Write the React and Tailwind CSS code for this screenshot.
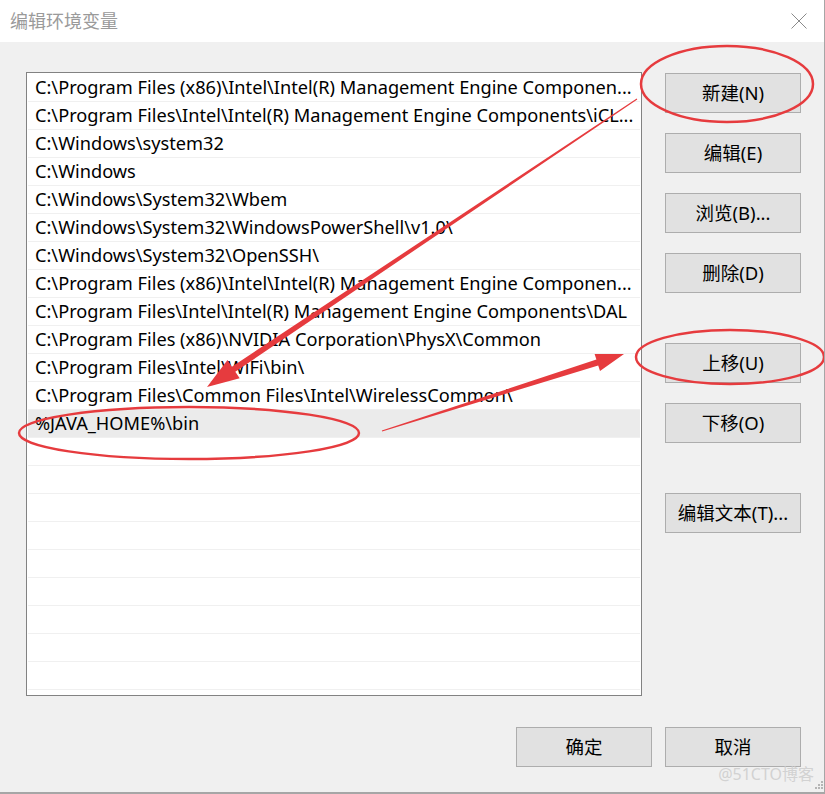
import React from 'react';

const paths = [
  'C:\\Program Files (x86)\\Intel\\Intel(R) Management Engine Componen...',
  'C:\\Program Files\\Intel\\Intel(R) Management Engine Components\\iCL...',
  'C:\\Windows\\system32',
  'C:\\Windows',
  'C:\\Windows\\System32\\Wbem',
  'C:\\Windows\\System32\\WindowsPowerShell\\v1.0\\',
  'C:\\Windows\\System32\\OpenSSH\\',
  'C:\\Program Files (x86)\\Intel\\Intel(R) Management Engine Componen...',
  'C:\\Program Files\\Intel\\Intel(R) Management Engine Components\\DAL',
  'C:\\Program Files (x86)\\NVIDIA Corporation\\PhysX\\Common',
  'C:\\Program Files\\Intel\\WiFi\\bin\\',
  'C:\\Program Files\\Common Files\\Intel\\WirelessCommon\\',
  '%JAVA_HOME%\\bin',
];

const SELECTED = 12;
const TOTAL_ROWS = 22;

const font = { fontFamily: '"Noto Sans", "Noto Sans CJK SC", sans-serif' };

const Button = ({ children, className = '' }) => (
  <button
    className={`w-[136px] h-[40px] bg-[#e1e1e1] border border-[#adadad] text-[18.5px] text-black flex items-center justify-center ${className}`}
  >
    {children}
  </button>
);

const Annotations = () => (
  <svg className="absolute inset-0 pointer-events-none" width="825" height="794" viewBox="0 0 825 794">
    <g fill="none" stroke="#e63b3e" strokeWidth="2.5">
      <ellipse cx="727" cy="84" rx="86" ry="38" />
      <ellipse cx="730" cy="357" rx="94" ry="27" />
      <ellipse cx="189" cy="433" rx="170" ry="26" />
    </g>
    <g fill="#e63b3e">
      <polygon points="636.7,98.6 231.9,366.7 227.5,360.1 207,387 239.7,378.3 235.3,371.7 637.3,99.4" />
      <polygon points="382.15,431.48 598.2,365.4 600.0,371.1 624,354 594.6,353.9 596.4,359.6 381.85,430.52" />
    </g>
  </svg>
);

export default function App() {
  const rows = Array.from({ length: TOTAL_ROWS }, (_, i) => paths[i] ?? '');

  return (
    <div className="relative w-[825px] h-[794px] flex flex-col bg-[#f0f0f0] border-r border-b-2 border-[#a6a6a6] overflow-hidden" style={font}>
      {/* 标题栏 */}
      <div className="h-[42px] bg-white flex items-center justify-between pl-[10px] pr-[17px]">
        <span className="text-[18px] text-[#9a9a9a] leading-none">编辑环境变量</span>
        <svg width="16" height="16" viewBox="0 0 16 16">
          <path d="M0.5 0.5 L15.5 15.5 M15.5 0.5 L0.5 15.5" stroke="#8a8a8a" strokeWidth="1" />
        </svg>
      </div>

      <div className="flex-1 flex flex-col pl-[26px] pt-[30px]">
        <div className="flex">
          {/* 列表 */}
          <div className="w-[616px] h-[624px] bg-white border border-[#828282] p-px overflow-hidden">
            {rows.map((text, i) => (
              <div
                key={i}
                className={`h-[28px] border-b border-[#f0f0f0] pl-[7px] flex items-center text-[18.2px] text-black whitespace-nowrap ${i === SELECTED ? 'bg-[#ebebeb]' : ''}`}
              >
                {text}
              </div>
            ))}
          </div>

          {/* 右侧按钮 */}
          <div className="ml-[23px] mt-px flex flex-col">
            <Button>新建(N)</Button>
            <Button className="mt-[20px]">编辑(E)</Button>
            <Button className="mt-[20px]">浏览(B)...</Button>
            <Button className="mt-[20px]">删除(D)</Button>
            <Button className="mt-[50px]">上移(U)</Button>
            <Button className="mt-[20px]">下移(O)</Button>
            <Button className="mt-[50px]">编辑文本(T)...</Button>
          </div>
        </div>

        {/* 底部按钮 */}
        <div className="flex justify-end gap-[13px] mt-[31px] pr-[23px]">
          <Button>确定</Button>
          <Button>取消</Button>
        </div>
      </div>

      <div className="absolute right-[10px] bottom-[10px] text-[16px] text-[#d2d2d2] leading-none">@51CTO博客</div>
      <div className="absolute right-[1px] bottom-[3px] grid grid-cols-3 gap-[1px]">
        <span />
        <span />
        <span className="w-[2px] h-[2px] bg-[#b5b5b5]" />
        <span />
        <span className="w-[2px] h-[2px] bg-[#b5b5b5]" />
        <span className="w-[2px] h-[2px] bg-[#b5b5b5]" />
        <span className="w-[2px] h-[2px] bg-[#b5b5b5]" />
        <span className="w-[2px] h-[2px] bg-[#b5b5b5]" />
        <span className="w-[2px] h-[2px] bg-[#b5b5b5]" />
      </div>

      <Annotations />
    </div>
  );
}
